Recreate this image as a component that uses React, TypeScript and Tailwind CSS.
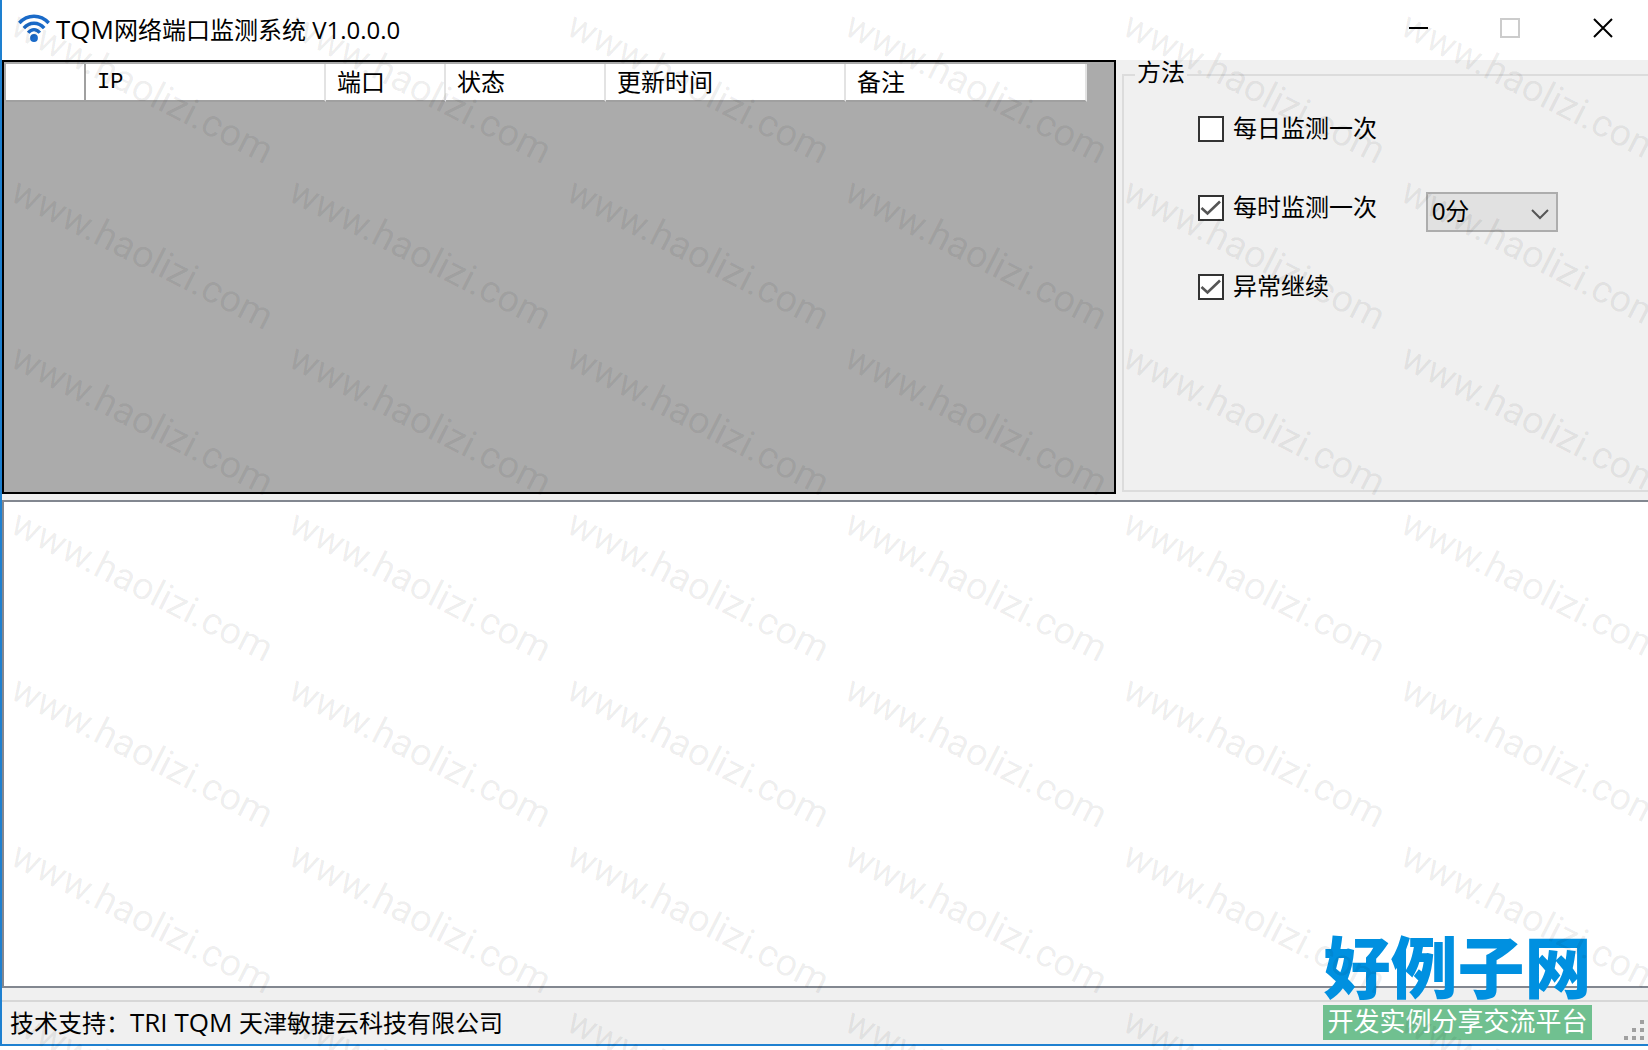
import React from 'react';

const columns = [
  { title: 'IP', width: 'w-[240px]', font: 'text-[22px] font-["Liberation_Mono","Noto_Sans_CJK_SC",monospace]' },
  { title: '端口', width: 'w-[120px]', font: 'text-2xl' },
  { title: '状态', width: 'w-[160px]', font: 'text-2xl' },
  { title: '更新时间', width: 'w-[240px]', font: 'text-2xl' },
  { title: '备注', width: 'w-[241px]', font: 'text-2xl' },
];

function WifiIcon() {
  return (
    <svg className="h-8 w-8 shrink-0" viewBox="0 0 32 32" fill="none" stroke="#1a6ac8" strokeWidth="3.4" aria-hidden="true">
      <path d="M1.300 10C9.500 1 22.500 1 30.700 10" />
      <path d="M5.800 15.200C11.500 8.600 20.500 8.600 26.200 15.200" />
      <path d="M10.200 19.800C13.500 15.600 18.500 15.600 21.800 19.800" />
      <circle cx="16" cy="25" r="3.900" fill="#1a6ac8" stroke="none" />
    </svg>
  );
}

function TitleBar() {
  return (
    <header className="flex h-[60px] items-start bg-white">
      <div className="flex h-[58px] grow items-center pl-4">
        <WifiIcon />
        <h1 className="pl-1.5 font-['Open_Sans','Noto_Sans_CJK_SC',sans-serif] text-2xl font-normal">
          <span className="text-[26px]">TQM</span>网络端口监测系统 V1.0.0.0
        </h1>
      </div>
      <div className="flex h-14 shrink-0">
        <button type="button" aria-label="最小化" className="grid w-23 place-items-center">
          <svg width="22" height="22" viewBox="0 0 22 22"><path d="M2 11H21" stroke="#000" strokeWidth="2" /></svg>
        </button>
        <button type="button" aria-label="最大化" disabled className="grid w-23 place-items-center">
          <svg width="22" height="22" viewBox="0 0 22 22"><rect x="2" y="2" width="18" height="18" fill="none" stroke="#ccc" strokeWidth="2" /></svg>
        </button>
        <button type="button" aria-label="关闭" className="grid w-23 place-items-center">
          <svg width="22" height="22" viewBox="0 0 22 22"><path d="M3 2L21 20M21 2L3 20" stroke="#000" strokeWidth="2" /></svg>
        </button>
      </div>
    </header>
  );
}

function PortTable() {
  return (
    <div className="overflow-hidden border-2 border-black bg-[#ababab] pt-0.5 pl-0.5">
      <table className="w-[1081px] table-fixed border-separate border-spacing-0 bg-white">
        <thead>
          <tr className="h-[38px]">
            <td className="w-20 border-r-2 border-b-2 border-[#a0a0a0] bg-white" />
            {columns.map((c) => (
              <th
                key={c.title}
                scope="col"
                className={`${c.width} ${c.font} border-r-2 border-b-2 border-r-[#e3e3e3] border-b-[#a0a0a0] p-0 pt-0.5 pl-[11px] text-left leading-8 font-normal`}
              >
                {c.title}
              </th>
            ))}
          </tr>
        </thead>
      </table>
    </div>
  );
}

function Option({ label, checked }: { label: string; checked?: boolean }) {
  return (
    <label className="flex h-8 items-center gap-[9px]">
      <span className="relative grid h-[26px] w-[26px]">
        <input
          type="checkbox"
          defaultChecked={checked}
          className="peer col-start-1 row-start-1 h-[26px] w-[26px] appearance-none border-2 border-[#333] bg-white"
        />
        <svg
          className="pointer-events-none invisible col-start-1 row-start-1 h-[26px] w-[26px] peer-checked:visible"
          viewBox="0 0 26 26"
          fill="none"
          stroke="#555"
          strokeWidth="2.600"
        >
          <path d="M3.500 13L9.500 18.500L22 6.500" />
        </svg>
      </span>
      {label}
    </label>
  );
}

function MethodGroup() {
  return (
    <fieldset className="mb-0.5 ml-1.5 border-2 border-r-0 border-[#dcdcdc] pl-[74px]">
      <legend className="-ml-[63px] h-[30px] px-0.5 text-2xl leading-[26px]">方法</legend>
      <div className="flex gap-[49px] pt-[23px] text-2xl">
        <div className="flex flex-col gap-[47px]">
          <Option label="每日监测一次" />
          <Option label="每时监测一次" checked />
          <Option label="异常继续" checked />
        </div>
        <div className="relative mt-[79px] h-10 w-[132px]">
          <select
            aria-label="分钟"
            className="h-10 w-full appearance-none border-2 border-[#adadad] bg-[#e1e1e1] pl-1 text-2xl leading-8"
          >
            <option>0分</option>
          </select>
          <svg className="pointer-events-none absolute top-3 right-2 h-5 w-5" viewBox="0 0 20 20" fill="none" stroke="#555" strokeWidth="2">
            <path d="M2 6L10 14L18 6" />
          </svg>
        </div>
      </div>
    </fieldset>
  );
}

function Grip() {
  return (
    <svg className="h-6 w-6 self-end" viewBox="0 0 24 24" fill="#a0a0a0" aria-hidden="true">
      <path d="M16 0h4v4h-4zM8 8h4v4h-4zM16 8h4v4h-4zM0 16h4v4h-4zM8 16h4v4h-4zM16 16h4v4h-4z" />
    </svg>
  );
}

function SiteBadge() {
  return (
    <div className="absolute right-14 bottom-2.5 w-[269px] text-center whitespace-nowrap">
      <div className="text-[67px] leading-[70px] font-black text-[#0090e0]">好例子网</div>
      <div className="h-[35px] bg-[#70c090] text-[26px] leading-[34px] text-white">开发实例分享交流平台</div>
    </div>
  );
}

function Watermark() {
  return (
    <div aria-hidden="true" className="pointer-events-none absolute inset-0 overflow-hidden">
      <div className="-mt-1 grid w-max auto-rows-[166px] grid-cols-[repeat(6,278px)]">
        {Array.from({ length: 42 }, (_, i) => (
          <span
            key={i}
            className="mt-1 ml-[5px] h-10 w-max origin-bottom-left rotate-[27deg] font-[Roboto,sans-serif] text-[38px] leading-10 text-black/7"
          >
            www.haolizi.com
          </span>
        ))}
      </div>
    </div>
  );
}

export default function App() {
  return (
    <div className="relative flex min-h-screen flex-col bg-white pb-1 font-['Liberation_Sans','Noto_Sans_CJK_SC',sans-serif] text-black">
      <main className="flex grow flex-col border-b-2 border-l-2 border-[#1e80d0] bg-[#f0f0f0]">
        <TitleBar />
        <div className="grid h-[434px] grid-cols-[1114fr_532fr]">
          <PortTable />
          <MethodGroup />
        </div>
        <textarea
          aria-label="日志"
          className="mt-1.5 block w-full grow resize-none border-2 border-r-0 border-[#828790] bg-white"
        />
        <footer className="mt-3 flex h-11 items-center justify-between border-t-2 border-[#d7d7d7] pl-2 font-['Open_Sans','Noto_Sans_CJK_SC',sans-serif] text-2xl leading-10">
          <p className="pb-0.5">
            技术支持：<span className="text-[26px]">TRI TQM </span>天津敏捷云科技有限公司
          </p>
          <Grip />
        </footer>
      </main>
      <SiteBadge />
      <Watermark />
    </div>
  );
}
